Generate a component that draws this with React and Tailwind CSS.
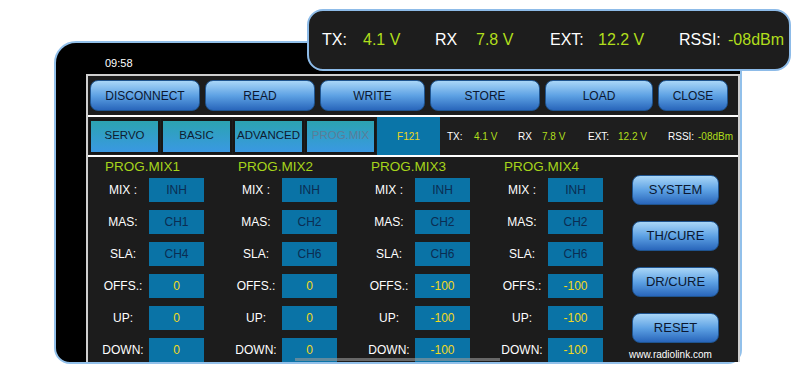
import React from "react";

const font = { fontFamily: '"Liberation Sans", Arial, sans-serif' };

const topButtons = [
  { label: "DISCONNECT", w: "w-[110px]" },
  { label: "READ", w: "w-[110px]" },
  { label: "WRITE", w: "w-[105px]" },
  { label: "STORE", w: "w-[110px]" },
  { label: "LOAD", w: "w-[108px]" },
  { label: "CLOSE", w: "w-[70px]" },
];

const tabs = ["SERVO", "BASIC", "ADVANCED", "PROG.MIX"];

const mixes = [
  { name: "PROG.MIX1", mas: "CH1", sla: "CH4", offs: "0", up: "0", down: "0" },
  { name: "PROG.MIX2", mas: "CH2", sla: "CH6", offs: "0", up: "0", down: "0" },
  { name: "PROG.MIX3", mas: "CH2", sla: "CH6", offs: "-100", up: "-100", down: "-100" },
  { name: "PROG.MIX4", mas: "CH2", sla: "CH6", offs: "-100", up: "-100", down: "-100" },
];

const sideButtons = ["SYSTEM", "TH/CURE", "DR/CURE", "RESET"];

// group width / label width for the telemetry readouts
const bigStats = [
  { label: "TX:", value: "4.1 V", w: "w-[113px]", lw: "w-[41px]" },
  { label: "RX", value: "7.8 V", w: "w-[115px]", lw: "w-[41px]" },
  { label: "EXT:", value: "12.2 V", w: "w-[129px]", lw: "w-[48px]" },
  { label: "RSSI:", value: "-08dBm", w: "w-[110px]", lw: "w-[49px]" },
];

const smallStats = [
  { label: "TX:", value: "4.1 V", w: "w-[71px]", lw: "w-[27px]" },
  { label: "RX", value: "7.8 V", w: "w-[70px]", lw: "w-[24px]" },
  { label: "EXT:", value: "12.2 V", w: "w-[80px]", lw: "w-[30px]" },
  { label: "RSSI:", value: "-08dBm", w: "w-[68px]", lw: "w-[30px]" },
];

function BlueButton({ label, className }) {
  return (
    <div
      className={`flex items-center justify-center rounded-[8px] border border-[#1f548f] bg-linear-to-b from-[#a9d6f7] via-[#5ea2e4] to-[#2966bb] text-[#0b1730] ${className}`}
    >
      {label}
    </div>
  );
}

function MixRow({ label, value, dark }) {
  return (
    <div className="flex h-[24px] items-center">
      <div className="ml-[10px] w-[50px] whitespace-nowrap text-center text-[12px] text-white">{label}</div>
      <div
        className={`ml-[1px] flex h-[24px] w-[55px] items-center justify-center bg-[#0a73a6] text-[12px] ${
          dark ? "text-[#0b2d52]" : "text-[#f3d91e]"
        }`}
      >
        {value}
      </div>
    </div>
  );
}

function MixColumn({ mix }) {
  return (
    <div className="flex w-[133px] flex-col gap-[8px]">
      <div className="-mb-[7px] h-[20px] pl-[17px] text-[13.5px] leading-[20px] text-[#a6d41b]">
        {mix.name}
      </div>
      <MixRow label="MIX :" value="INH" dark />
      <MixRow label="MAS:" value={mix.mas} dark />
      <MixRow label="SLA:" value={mix.sla} dark />
      <MixRow label="OFFS.:" value={mix.offs} />
      <MixRow label="UP:" value={mix.up} />
      <MixRow label="DOWN:" value={mix.down} />
    </div>
  );
}

function Stat({ s }) {
  return (
    <div className={`flex shrink-0 items-center whitespace-nowrap ${s.w}`}>
      <span className={`shrink-0 text-white ${s.lw}`}>{s.label}</span>
      <span className="text-[#b0de1c]">{s.value}</span>
    </div>
  );
}

export default function App() {
  return (
    <div className="relative h-[379px] w-[800px] overflow-hidden bg-white" style={font}>
      <div className="pl-[54px] pt-[41px]">
        {/* phone frame */}
        <div className="flex h-[323px] w-[688px] flex-col rounded-tl-[22px] rounded-tr-[14px] rounded-bl-[16px] rounded-br-[14px] border-2 border-[#92c0ea] bg-black pl-[30px] pt-[31px]">
          <div className="absolute left-[105px] top-[55px] text-[11px] text-white">09:58</div>
          {/* screen */}
          <div className="relative flex flex-1 flex-col overflow-hidden border-2 border-b-0 border-[#cfcfcf] bg-[#1c1c1c]">
            {/* top buttons */}
            <div className="flex h-[39px] items-center gap-[5px] bg-[#1d1d1d] pl-[2px]">
              {topButtons.map((b) => (
                <BlueButton key={b.label} label={b.label} className={`h-[31px] text-[12px] ${b.w}`} />
              ))}
            </div>
            <div className="h-[2px] bg-white" />
            {/* tabs */}
            <div className="flex h-[38px] items-stretch bg-[#1e1e1e]">
              <div className="flex items-center gap-[1px] pl-[1px]">
                {tabs.map((t, i) => (
                  <div
                    key={t}
                    className={`flex h-[35px] w-[71px] items-center justify-center whitespace-nowrap border-2 border-[#171717] bg-linear-to-b from-[#2ca3b1] to-[#3a98e2] text-[11.5px] ${
                      i === 3 ? "text-[#5b7d99]" : "text-[#0e1c30]"
                    }`}
                  >
                    {t}
                  </div>
                ))}
              </div>
              <div className="ml-[1px] flex w-[63px] items-center justify-center bg-[#0a75a8] text-[10px] text-[#ecd61b]">
                F121
              </div>
              <div className="ml-[7px] flex items-center text-[10px]">
                {smallStats.map((s) => (
                  <Stat key={s.label} s={s} />
                ))}
              </div>
            </div>
            <div className="h-[2px] bg-white" />
            {/* prog mix content */}
            <div className="flex flex-1">
              {mixes.map((m) => (
                <MixColumn key={m.name} mix={m} />
              ))}
              <div className="ml-[12px] flex flex-col pt-[18px]">
                <div className="flex flex-col gap-[16px]">
                  {sideButtons.map((s) => (
                    <BlueButton key={s} label={s} className="h-[30px] w-[87px] text-[13px]" />
                  ))}
                </div>
                <div className="-ml-[3px] mt-[4px] whitespace-nowrap text-[10px] text-white">www.radiolink.com</div>
              </div>
            </div>
            <div className="absolute bottom-[1px] left-[207px] h-[3px] w-[205px] bg-[#9a9a9a]/60" />
          </div>
        </div>
      </div>

      {/* telemetry popup */}
      <div className="absolute left-[307px] top-[9px] flex h-[62px] w-[484px] items-center rounded-[16px] border-2 border-[#8dbbe8] bg-[#1d1d1d] pl-[13px] text-[16px]">
        {bigStats.map((s) => (
          <Stat key={s.label} s={s} />
        ))}
      </div>
    </div>
  );
}
